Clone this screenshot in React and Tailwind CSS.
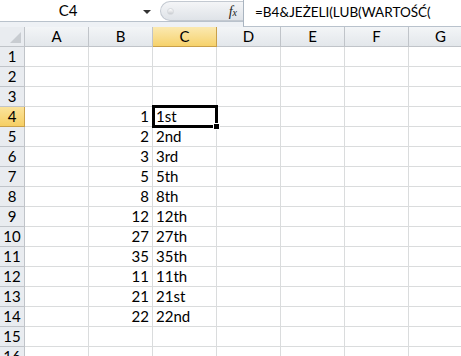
import React from "react";

const cols = ["A", "B", "C", "D", "E", "F", "G"];

const values = {
  4: [1, "1st"],
  5: [2, "2nd"],
  6: [3, "3rd"],
  7: [5, "5th"],
  8: [8, "8th"],
  9: [12, "12th"],
  10: [27, "27th"],
  11: [35, "35th"],
  12: [11, "11th"],
  13: [21, "21st"],
  14: [22, "22nd"],
};

const rows = Array.from({ length: 16 }, (_, i) => i + 1);

export default function App() {
  return (
    <div
      className="w-[461px] h-[356px] overflow-hidden bg-white text-black"
      style={{ fontFamily: "Lato, 'Open Sans', sans-serif" }}
    >
      {/* formula bar */}
      <div className="flex h-[27px]">
        <div className="flex flex-col w-[243px]">
          <div className="flex h-[22px] border-b border-[#b9c2cc]">
            <div className="relative w-[160px] bg-white flex items-center justify-center text-[15px] pr-[24px]">
              C4
              <span className="absolute right-[9px] top-[10px] w-0 h-0 border-l-[4px] border-r-[4px] border-t-[4px] border-l-transparent border-r-transparent border-t-[#333]" />
            </div>
            <div className="flex-1 flex items-center rounded-l-full border border-r-0 border-[#c3c9d1] bg-gradient-to-b from-[#f4f5f7] to-[#dfe3e8] mt-[1px]">
              <span className="ml-[6px] w-[7px] h-[7px] rounded-full bg-gradient-to-b from-[#ffffff] to-[#c9ccd1] border border-[#d5d8dc]" />
              <span
                className="ml-auto mr-[6px] text-[14px] italic text-[#222]"
                style={{ fontFamily: "'Liberation Serif', serif" }}
              >
                f<span className="text-[10px]">x</span>
              </span>
            </div>
          </div>
          <div className="flex-1 bg-[#eef1f5]" />
        </div>
        <div className="flex-1 bg-white border-l border-[#a9b4c0] border-b border-b-[#b9c2cc] pl-[11px] pt-[1px] text-[13.5px] leading-[22px]">
          =B4&amp;JEŻELI(LUB(WARTOŚĆ(
        </div>
      </div>

      {/* column headers */}
      <div className="flex h-[20px]">
        <div className="relative w-[25px] shrink-0 bg-[#e9ecf0] border-r border-b border-[#c0c4c9]">
          <svg className="absolute right-[3px] bottom-[3px]" width="11" height="11" viewBox="0 0 11 11">
            <polygon points="11,0 11,11 0,11" fill="#c8ccd1" />
          </svg>
        </div>
        {cols.map(c => (
          <div
            key={c}
            className={`w-[64px] shrink-0 flex items-center justify-center text-[15px] border-r border-b ${
              c === "C"
                ? "bg-gradient-to-b from-[#fbe9b0] to-[#f6d26b] border-[#c9a04a]"
                : "bg-gradient-to-b from-[#f3f5f7] to-[#e3e7eb] border-[#c0c4c9]"
            }`}
          >
            {c}
          </div>
        ))}
      </div>

      {/* rows */}
      {rows.map(r => (
        <div key={r} className="flex h-[20px]">
          <div
            className={`w-[25px] shrink-0 flex items-center justify-center text-[15px] border-r border-b ${
              r === 4
                ? "bg-gradient-to-b from-[#fbe39a] to-[#f6cf63] border-[#c9a04a]"
                : "bg-[#e9ecf0] border-[#c0c4c9]"
            }`}
          >
            {r}
          </div>
          {cols.map(c => (
            <div
              key={c}
              className={`relative w-[64px] shrink-0 border-r border-b border-[#dadcdd] text-[15px] leading-[19px] px-[3px] ${
                c === "B" ? "text-right" : "text-left"
              } ${r === 4 && c === "C" ? "z-10" : ""}`}
            >
              {values[r] && c === "B" && values[r][0]}
              {values[r] && c === "C" && values[r][1]}
              {r === 4 && c === "C" && (
                <span className="absolute -left-[1px] -top-[2px] w-[66px] h-[23px] border-[3px] border-black pointer-events-none">
                  <span className="absolute -right-[5px] -bottom-[5px] w-[7px] h-[7px] bg-black border border-white" />
                </span>
              )}
            </div>
          ))}
        </div>
      ))}
    </div>
  );
}
